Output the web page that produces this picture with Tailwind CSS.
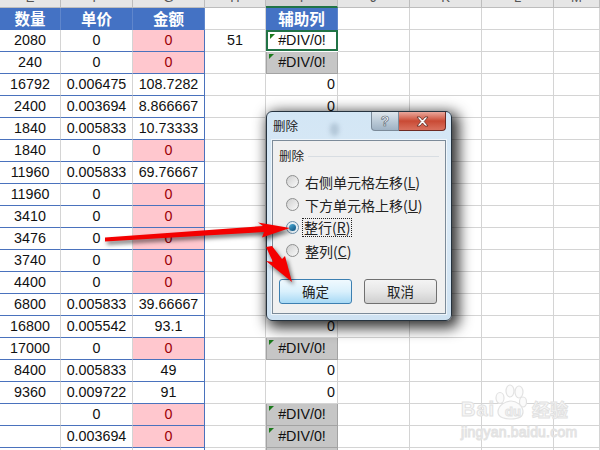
<!DOCTYPE html>
<html>
<head>
<meta charset="utf-8">
<script src="https://cdn.jsdelivr.net/npm/@tailwindcss/browser@4"></script>
</head>
<body class="m-0 bg-white">
<div class="relative w-[600px] h-[450px] overflow-hidden bg-white text-[#111] font-['Liberation_Sans','Noto_Sans_CJK_SC',sans-serif] text-[14.3px]">
  <div id="sheet" class="grid grid-cols-[61px_72px_72px_61px_72px_72px_72px_72px_46px]"></div>

  <!-- watermark -->
  <svg class="absolute left-[490px] top-[384px]" width="44" height="40" viewBox="0 0 44 40" fill="#fbfbfb" stroke="#e2e2e2" stroke-width="1.2">
    <ellipse cx="10" cy="14" rx="4" ry="5.5"/><ellipse cx="20" cy="7" rx="4" ry="6"/><ellipse cx="29" cy="8" rx="4" ry="6"/><ellipse cx="33" cy="18" rx="3.500" ry="5"/>
    <path d="M8 28c0-7 8-11 13-11s12 4 12 11c0 6-7 7-12 7s-13-1-13-7z"/>
  </svg>
  <div class="absolute left-[461px] top-[388px] w-[110px] h-[52px] text-[#f8f8f8] [-webkit-text-stroke:1px_#e2e2e2]">
    <div class="flex items-end h-[33px]">
      <span class="font-bold text-[20px] leading-[24px] tracking-[1px] w-[35px]">Bai</span>
      <span class="font-bold text-[13px] leading-[18px] ml-[5px] w-[24px] text-center">du</span>
      <span class="text-[18px] leading-[24px] ml-[7px] font-['Noto_Sans_CJK_SC',sans-serif] font-bold whitespace-nowrap">经验</span>
    </div>
    <div class="mt-[4px] text-[14px] leading-[15px] tracking-[.2px] whitespace-nowrap">jingyan.baidu.com</div>
  </div>

  <!-- dialog -->
  <div class="absolute left-[266px] top-[111px] w-[186px] h-[210px] rounded-[6px] border border-[#26333f] bg-gradient-to-b from-[#d3e6f5] via-[#dbeaf6] to-[#cfe2f2] shadow-[4px_4px_14px_3px_rgba(0,0,0,.8)] px-[5px] pb-[6px] flex flex-col font-['Noto_Sans_CJK_SC',sans-serif]">
    <span class="absolute left-[63px] top-[11px] w-[9px] h-[13px] rounded-full bg-[#9fb4c6]/60 blur-[2px]"></span>
    <div class="relative h-[28px] flex items-start shrink-0">
      <span class="mt-[5px] ml-[1px] text-[12.5px] leading-[18px] text-[#222]">删除</span>
      <div class="ml-auto flex">
        <div class="w-[28px] h-[19px] rounded-bl-[4px] border border-t-0 border-[#7b8a99] bg-gradient-to-b from-[#dfe6ec] via-[#bccbd8] to-[#9fb2c4] flex items-center justify-center text-white font-bold text-[14px] leading-none [-webkit-text-stroke:.6px_#4d5c6b] font-['Liberation_Sans',sans-serif]">?</div>
        <div class="w-[47px] h-[19px] rounded-br-[4px] border border-t-0 border-l-0 border-[#6e2a22] bg-gradient-to-b from-[#e9a79c] via-[#c94a34] to-[#d9705d] flex items-center justify-center">
          <svg width="13" height="11" viewBox="0 0 13 11"><path d="M1 1h3l2.500 3L9 1h3L8.200 5.500 12 10H9L6.500 7 4 10H1l3.800-4.500z" fill="#fff" stroke="#5d2a22" stroke-width=".8"/></svg>
        </div>
      </div>
    </div>
    <div class="flex-1 border border-[#7c8b99] bg-[#f0f0f0] px-[6px] pt-[5px] flex flex-col text-[#222] outline outline-1 outline-white/60">
      <div class="flex items-center h-[20px]">
        <span class="text-[12.5px] leading-[20px]">删除</span>
        <div class="ml-[4px] flex-1 h-px bg-[#d8dde2]"></div>
      </div>
      <div class="mt-[4px] flex flex-col text-[14px]">
        <div class="flex items-center h-[23px] pl-[7px]"><span class="w-[13px] h-[13px] rounded-full border border-[#8e8f8f] bg-gradient-to-br from-[#cfcfcf] to-[#fafafa]"></span><span class="ml-[5px] leading-[20px] px-[1px]">右侧单元格左移(<u>L</u>)</span></div>
        <div class="flex items-center h-[23px] pl-[7px]"><span class="w-[13px] h-[13px] rounded-full border border-[#8e8f8f] bg-gradient-to-br from-[#cfcfcf] to-[#fafafa]"></span><span class="ml-[5px] leading-[20px] px-[1px]">下方单元格上移(<u>U</u>)</span></div>
        <div class="flex items-center h-[23px] pl-[7px]"><span class="w-[13px] h-[13px] rounded-full border border-[#6b8ea8] bg-[#e4edf3] flex items-center justify-center"><span class="w-[7px] h-[7px] rounded-full bg-gradient-to-br from-[#4fb2dc] to-[#0b4f7d]"></span></span><span class="ml-[4px] leading-[17px] px-[1px] outline outline-1 outline-dotted outline-[#222]">整行(<u>R</u>)</span></div>
        <div class="flex items-center h-[23px] pl-[7px]"><span class="w-[13px] h-[13px] rounded-full border border-[#8e8f8f] bg-gradient-to-br from-[#cfcfcf] to-[#fafafa]"></span><span class="ml-[5px] leading-[20px] px-[1px]">整列(<u>C</u>)</span></div>
      </div>
      <div class="mt-[17px] flex justify-between text-[13.5px]">
        <div class="w-[73px] h-[25px] rounded-[3px] border border-[#3c7fb1] bg-gradient-to-b from-[#f0f9fe] via-[#d9f0fc] to-[#a7d9f5] flex items-center justify-center">确定</div>
        <div class="w-[73px] h-[25px] mr-[2px] rounded-[3px] border border-[#707070] bg-gradient-to-b from-[#f4f4f4] via-[#e6e6e6] to-[#cfcfcf] flex items-center justify-center">取消</div>
      </div>
    </div>
  </div>

  <!-- arrows -->
  <svg class="absolute left-0 top-0 pointer-events-none drop-shadow-[2px_3px_2px_rgba(0,0,0,.55)]" width="600" height="450" viewBox="0 0 600 450">
    <polygon fill="#f40000" points="105,237.500 263,226 258,222.500 290,228 262,237.500 264,232 105,241.500"/>
    <polygon fill="#f40000" points="266,247 272,246 282,259 285,256 292,282 266,261 273,262"/>
  </svg>
</div>
<script>
const rows = [
 ['2080','0','0','51','S'],['240','0','0','','E'],['16792','0.006475','108.7282','','0'],['2400','0.003694','8.866667','','0'],
 ['1840','0.005833','10.73333','','0'],['1840','0','0','','0'],['11960','0.005833','69.76667','','0'],['11960','0','0','','0'],
 ['3410','0','0','','0'],['3476','0','0','','0'],['3740','0','0','','0'],['4400','0','0','','0'],
 ['6800','0.005833','39.66667','','0'],['16800','0.005542','93.1','','0'],['17000','0','0','','E'],['8400','0.005833','49','','0'],
 ['9360','0.009722','91','','0'],['','0','0','','E'],['','0.003694','0','','E'],['','','','','E']];
const gray = 'border-b border-r border-[#d4d4d4]';
const base = 'relative h-[22px] flex items-center justify-center leading-[20px] whitespace-nowrap pb-px ';
let h = '';
'EFGHIJKLM'.split('').forEach(c => {
  const sel = c === 'I';
  h += '<div class="h-[8px] overflow-hidden text-center text-[#555] border-r ' + (sel ? 'bg-[#d2d2d2] border-b-2 border-b-[#217346] border-r-[#bdbdbd]' : 'bg-[#e6e6e6] border-b border-[#bdbdbd]') + '"><div class="-mt-[9px] leading-[14px] text-[13px]">' + c + '</div></div>';
});
const head = ['数量','单价','金额','','辅助列'];
const hc = 'h-[22px] flex items-center justify-center font-bold text-[15.5px] text-white bg-[#4472c4] border-r border-[#5f86cc] font-[\'Noto_Sans_CJK_SC\',sans-serif]';
head.forEach((t, i) => {
  h += t ? '<div class="' + hc + '">' + t + '</div>' : '<div class="h-[22px] ' + gray + '"></div>';
});
for (let i = 0; i < 4; i++) h += '<div class="h-[22px] ' + gray + '"></div>';
rows.forEach(r => {
  h += '<div class="' + base + 'border-b border-b-[#4a72bd] border-r border-r-[#d4d4d4]">' + r[0] + '</div>';
  h += '<div class="' + base + 'border-b border-b-[#4a72bd] border-r border-r-[#d4d4d4]">' + r[1] + '</div>';
  if (r[2] === '0') h += '<div class="' + base + 'bg-[#ffc7ce] text-[#9c0006] border-b border-b-[#4a72bd] border-r border-r-[#4a72bd]">0</div>';
  else h += '<div class="' + base + 'border-b border-b-[#4a72bd] border-r border-r-[#4a72bd]">' + r[2] + '</div>';
  h += '<div class="' + base + gray + '">' + r[3] + '</div>';
  const tri = '<span class="absolute left-[2px] top-[2px] w-[5px] h-[5px] bg-[#1c7a1c] [clip-path:polygon(0_0,100%_0,0_100%)]"></span>';
  if (r[4] === 'S') h += '<div class="' + base + 'bg-white border-2 border-[#217346] !h-[21px] self-start">' + tri + '#DIV/0!</div>';
  else if (r[4] === 'E') h += '<div class="' + base + 'bg-[#c6c6c6] border-b border-r border-l border-[#a3a3a3]">' + tri + '#DIV/0!</div>';
  else h += '<div class="' + base + gray + ' !justify-end pr-[2px]">0</div>';
  for (let i = 0; i < 4; i++) h += '<div class="h-[22px] ' + gray + '"></div>';
});
document.getElementById('sheet').innerHTML = h;
</script>
</body>
</html>
